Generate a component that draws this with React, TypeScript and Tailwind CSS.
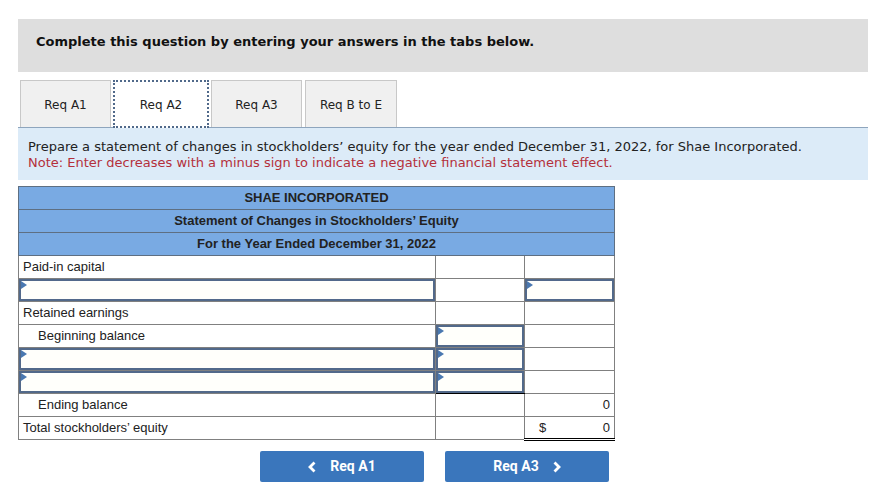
import React from "react";

const V = { fontFamily: '"DejaVu Sans", Verdana, sans-serif' };
const A = { fontFamily: '"Liberation Sans", Arial, sans-serif' };

function Tri() {
  return (
    <svg className="absolute left-0 top-0" width="6" height="8" viewBox="0 0 6 8">
      <polygon points="0,0 6,4 0,8" fill="#4a78b0" />
    </svg>
  );
}

function InputCell({ className = "" }: { className?: string }) {
  return (
    <td className={`p-0 border border-[#808080] h-[23px] ${className}`}>
      <div className="relative h-[22px] border-2 border-[#52698a] bg-[#fffffb]">
        <Tri />
      </div>
    </td>
  );
}

function Cell({ children, className = "" }: { children?: React.ReactNode; className?: string }) {
  return <td className={`border border-[#808080] h-[23px] p-0 leading-[20px] ${className}`}>{children}</td>;
}

export default function App() {
  return (
    <div className="w-[878px] h-[504px] bg-white relative overflow-hidden">
      <div className="pt-[19px] pl-[18px] pr-[10px]" style={V}>
        <div className="h-[53px] bg-[#dedede] pl-[18px] pt-[15px] leading-[16px] text-[13px] font-bold text-[#111]">
          Complete this question by entering your answers in the tabs below.
        </div>
        <div className="mt-[9px] h-[47px] flex items-end pl-[2px] gap-[2px] border-b border-[#8ea5bd] text-[12px] text-[#222]">
          <div className="w-[91px] h-[47px] bg-[#f0f0f0] border border-b-0 border-[#c8c8c8] flex items-center justify-center pt-[2px]">Req A1</div>
          <div className="w-[96px] h-[48px] -mb-px bg-white border-2 border-dotted border-[#50698a] flex items-center justify-center pt-[2px]">Req A2</div>
          <div className="w-[91px] h-[47px] bg-[#f0f0f0] border border-b-0 border-[#c8c8c8] flex items-center justify-center pt-[2px]">Req A3</div>
          <div className="ml-[1px] w-[92px] h-[47px] bg-[#f0f0f0] border border-b-0 border-[#c8c8c8] flex items-center justify-center pt-[2px]">Req B to E</div>
        </div>
        <div className="h-[52px] bg-[#dcebf8] pl-[10px] pt-[11px] text-[13px] leading-[16px]">
          <div className="text-[#222]">Prepare a statement of changes in stockholders’ equity for the year ended December 31, 2022, for Shae Incorporated.</div>
          <div className="text-[#b4303b]">Note: Enter decreases with a minus sign to indicate a negative financial statement effect.</div>
        </div>
      </div>

      <div className="ml-[18px] mt-[6px]" style={A}>
        <table className="border-collapse text-[13px] text-[#222] w-[596px] table-fixed">
          <colgroup>
            <col style={{ width: 417 }} />
            <col style={{ width: 89 }} />
            <col style={{ width: 90 }} />
          </colgroup>
          <tbody>
            <tr>
              <td colSpan={3} className="h-[23px] leading-[20px] bg-[#79aae3] border border-[#5e6f82] text-center font-bold p-0">SHAE INCORPORATED</td>
            </tr>
            <tr>
              <td colSpan={3} className="h-[23px] leading-[20px] bg-[#79aae3] border border-[#5e6f82] text-center font-bold p-0">Statement of Changes in Stockholders’ Equity</td>
            </tr>
            <tr>
              <td colSpan={3} className="h-[23px] leading-[20px] bg-[#79aae3] border border-[#5e6f82] text-center font-bold p-0">For the Year Ended December 31, 2022</td>
            </tr>
            <tr>
              <Cell className="pl-[4px]">Paid-in capital</Cell>
              <Cell />
              <Cell />
            </tr>
            <tr>
              <InputCell />
              <Cell />
              <InputCell />
            </tr>
            <tr>
              <Cell className="pl-[4px]">Retained earnings</Cell>
              <Cell />
              <Cell />
            </tr>
            <tr>
              <Cell className="pl-[19px]">Beginning balance</Cell>
              <InputCell />
              <Cell />
            </tr>
            <tr>
              <InputCell />
              <InputCell />
              <Cell />
            </tr>
            <tr>
              <InputCell />
              <InputCell className="border-b-black" />
              <Cell />
            </tr>
            <tr>
              <Cell className="pl-[19px]">Ending balance</Cell>
              <Cell />
              <Cell className="text-right pr-[4px] border-b-black">0</Cell>
            </tr>
            <tr>
              <Cell className="pl-[4px]">Total stockholders’ equity</Cell>
              <Cell />
              <Cell className="border-b-[3px] border-b-black border-double">
                <div className="flex justify-between pl-[14px] pr-[4px]">
                  <span>$</span>
                  <span>0</span>
                </div>
              </Cell>
            </tr>
          </tbody>
        </table>
      </div>

      <div className="flex mt-[10px] ml-[260px] gap-[21px] text-white font-bold text-[14px]" style={{ fontFamily: 'Roboto, "Liberation Sans", sans-serif' }}>
        <div className="w-[164px] h-[31px] bg-[#3a76bc] rounded-[2px] flex items-center justify-center gap-[14px]">
          <svg width="8" height="12" viewBox="0 0 8 12"><polyline points="6.5,1.5 2,6 6.5,10.5" fill="none" stroke="white" strokeWidth="2.8" /></svg>
          <span>Req A1</span>
        </div>
        <div className="w-[164px] h-[31px] bg-[#3a76bc] rounded-[2px] flex items-center justify-center gap-[14px]">
          <span>Req A3</span>
          <svg width="8" height="12" viewBox="0 0 8 12"><polyline points="1.5,1.5 6,6 1.5,10.5" fill="none" stroke="white" strokeWidth="2.8" /></svg>
        </div>
      </div>
    </div>
  );
}
